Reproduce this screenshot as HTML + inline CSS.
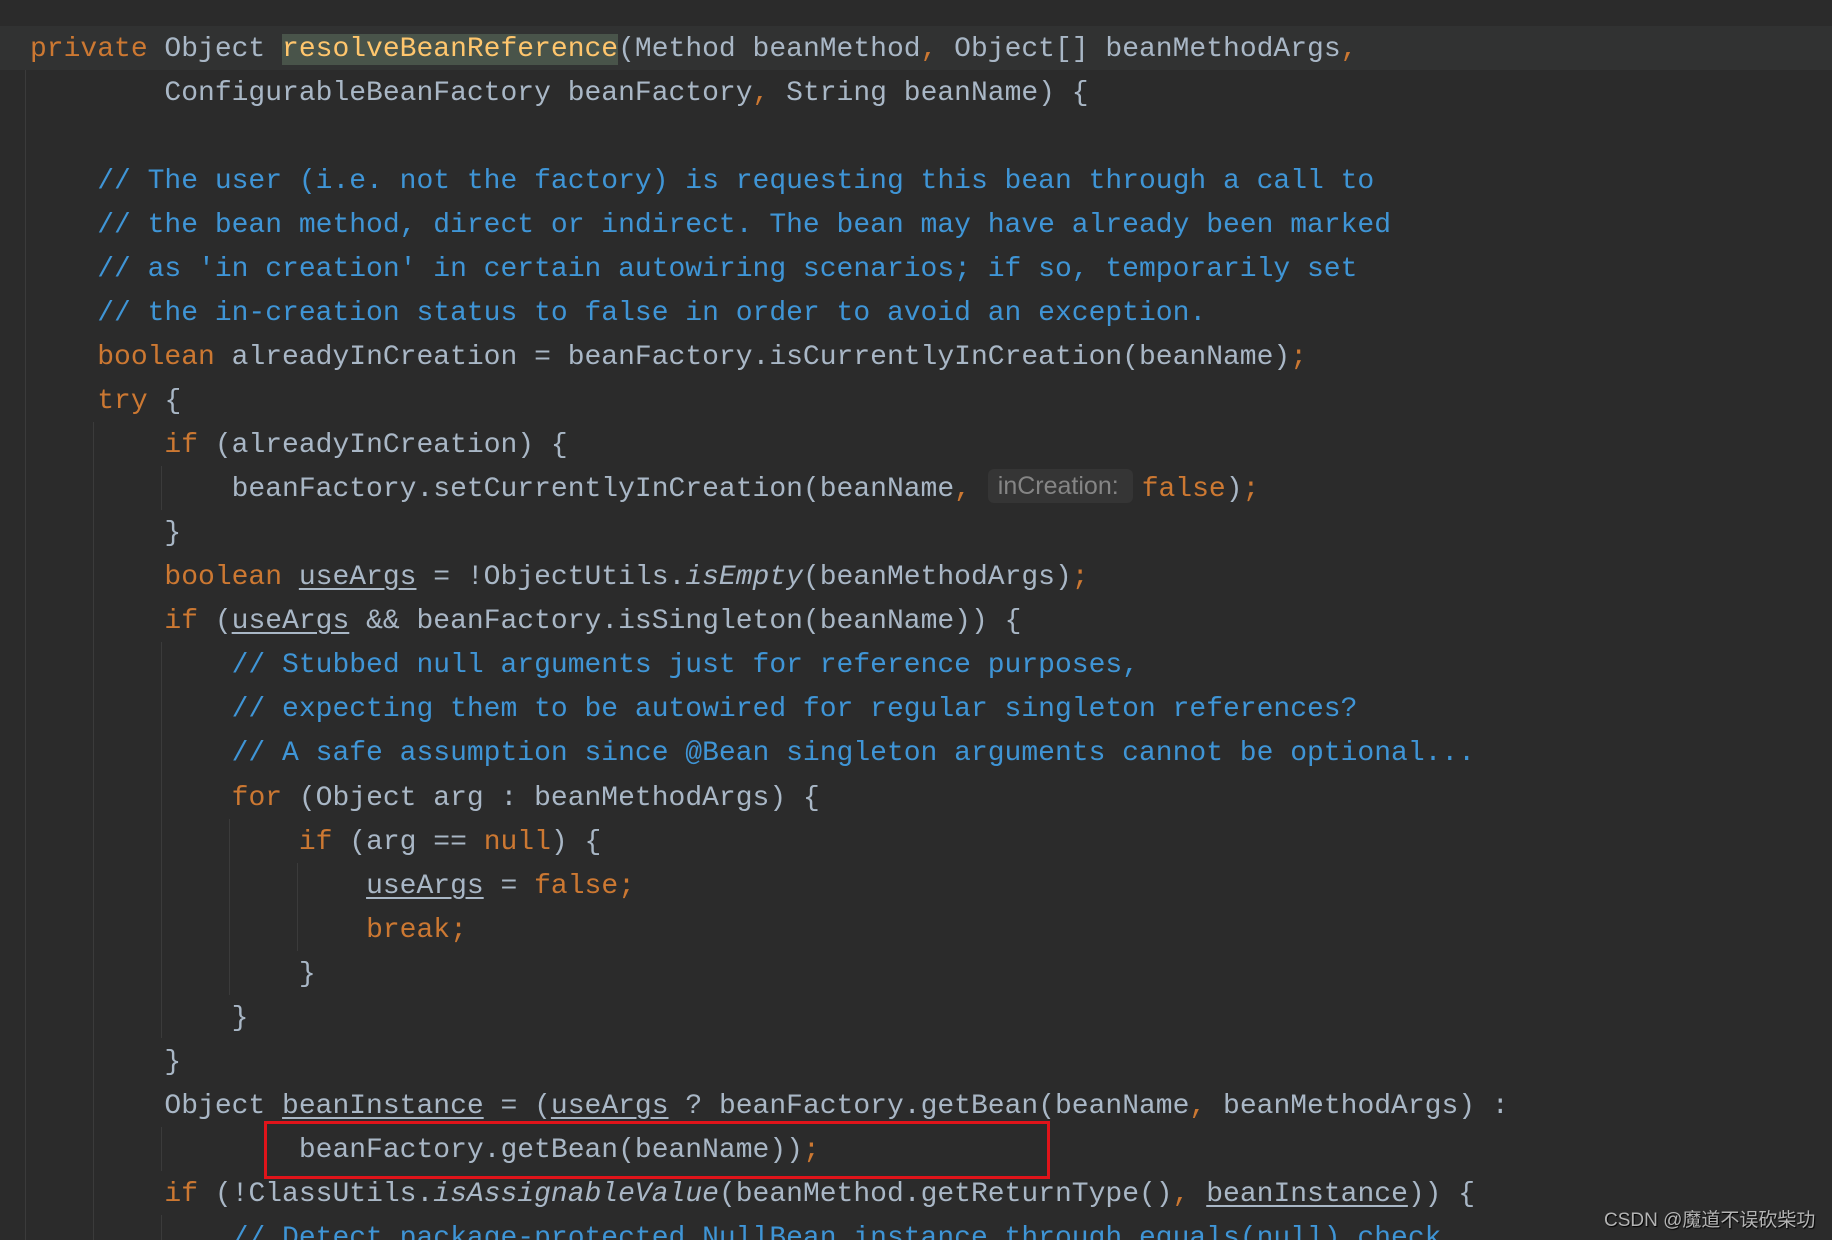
<!DOCTYPE html>
<html><head><meta charset="utf-8"><style>
html,body{margin:0;padding:0;background:#2b2b2b;width:1832px;height:1240px;overflow:hidden;position:relative}
.l{position:absolute;left:30px;height:44px;line-height:44px;margin-top:2px;font-family:"Liberation Mono",monospace;font-size:28px;color:#a9b7c6;white-space:pre}
.k{color:#cc7832}.c{color:#3f95d6}.m{color:#ffc66d;background:#49544a}.u{text-decoration:underline;text-underline-offset:4px}.i{font-style:italic}
.g{position:absolute;width:1px;background:#3b3b3b}
.hint{display:inline-block;font-family:"Liberation Sans",sans-serif;font-size:25px;color:#858585;background:#353535;border-radius:6px;padding:0 14px 0 10px;line-height:34px;vertical-align:2px;margin-right:9px}
</style></head><body>
<div style="position:absolute;left:0;top:26px;width:1832px;height:44px;background:#313232"></div>
<div class="g" style="left:25px;top:70px;height:1170px"></div>
<div class="g" style="left:93px;top:422px;height:818px"></div>
<div class="g" style="left:161px;top:466px;height:44px"></div>
<div class="g" style="left:161px;top:642px;height:396px"></div>
<div class="g" style="left:161px;top:1127px;height:44px"></div>
<div class="g" style="left:161px;top:1215px;height:25px"></div>
<div class="g" style="left:229px;top:819px;height:176px"></div>
<div class="g" style="left:297px;top:863px;height:88px"></div>
<div class="l" style="top:26px"><span class="k">private </span>Object <span class="m">resolveBeanReference</span>(Method beanMethod<span class="k">, </span>Object[] beanMethodArgs<span class="k">,</span></div>
<div class="l" style="top:70px">        ConfigurableBeanFactory beanFactory<span class="k">, </span>String beanName) {</div>
<div class="l c" style="top:158px">    // The user (i.e. not the factory) is requesting this bean through a call to</div>
<div class="l c" style="top:202px">    // the bean method, direct or indirect. The bean may have already been marked</div>
<div class="l c" style="top:246px">    // as 'in creation' in certain autowiring scenarios; if so, temporarily set</div>
<div class="l c" style="top:290px">    // the in-creation status to false in order to avoid an exception.</div>
<div class="l" style="top:334px">    <span class="k">boolean </span>alreadyInCreation = beanFactory.isCurrentlyInCreation(beanName)<span class="k">;</span></div>
<div class="l" style="top:378px">    <span class="k">try </span>{</div>
<div class="l" style="top:422px">        <span class="k">if </span>(alreadyInCreation) {</div>
<div class="l" style="top:466px">            beanFactory.setCurrentlyInCreation(beanName<span class="k">,</span> <span class="hint">inCreation:</span><span class="k">false</span>)<span class="k">;</span></div>
<div class="l" style="top:510px">        }</div>
<div class="l" style="top:554px">        <span class="k">boolean </span><span class="u">useArgs</span> = !ObjectUtils.<span class="i">isEmpty</span>(beanMethodArgs)<span class="k">;</span></div>
<div class="l" style="top:598px">        <span class="k">if </span>(<span class="u">useArgs</span> &amp;&amp; beanFactory.isSingleton(beanName)) {</div>
<div class="l c" style="top:642px">            // Stubbed null arguments just for reference purposes,</div>
<div class="l c" style="top:686px">            // expecting them to be autowired for regular singleton references?</div>
<div class="l c" style="top:730px">            // A safe assumption since @Bean singleton arguments cannot be optional...</div>
<div class="l" style="top:775px">            <span class="k">for </span>(Object arg : beanMethodArgs) {</div>
<div class="l" style="top:819px">                <span class="k">if </span>(arg == <span class="k">null</span>) {</div>
<div class="l" style="top:863px">                    <span class="u">useArgs</span> = <span class="k">false;</span></div>
<div class="l" style="top:907px">                    <span class="k">break;</span></div>
<div class="l" style="top:951px">                }</div>
<div class="l" style="top:995px">            }</div>
<div class="l" style="top:1039px">        }</div>
<div class="l" style="top:1083px">        Object <span class="u">beanInstance</span> = (<span class="u">useArgs</span> ? beanFactory.getBean(beanName<span class="k">, </span>beanMethodArgs) :</div>
<div class="l" style="top:1127px">                beanFactory.getBean(beanName))<span class="k">;</span></div>
<div class="l" style="top:1171px">        <span class="k">if </span>(!ClassUtils.<span class="i">isAssignableValue</span>(beanMethod.getReturnType()<span class="k">, </span><span class="u">beanInstance</span>)) {</div>
<div class="l c" style="top:1215px">            // Detect package-protected NullBean instance through equals(null) check</div>
<div style="position:absolute;left:264px;top:1121px;width:780px;height:52px;border:3px solid #e0141a"></div>
<div style="position:absolute;left:1604px;top:1205px;font-family:'Liberation Sans','Noto Sans CJK SC',sans-serif;font-size:19px;color:#b4b4b4;text-shadow:1px 1px 1px #000">CSDN @魔道不误砍柴功</div>
</body></html>
